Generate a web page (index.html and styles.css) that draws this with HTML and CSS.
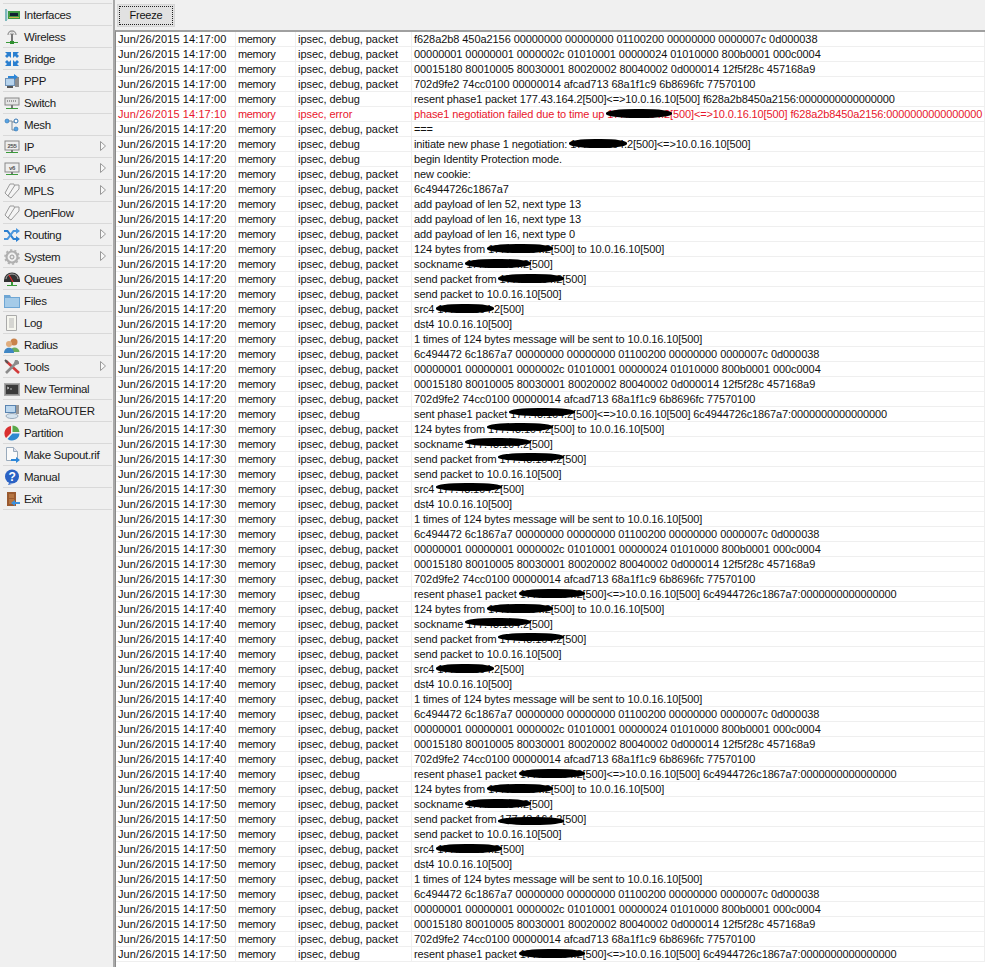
FILE: index.html
```html
<!DOCTYPE html>
<html lang="en">
<head>
<meta charset="utf-8">
<title>Log</title>
<link rel="stylesheet" href="styles.css">
</head>
<body>
<div class="app">
<nav class="menu">
<a class="item"><svg class="ic" viewBox="0 0 16 16"><path d="M1 2h2v12H1z" fill="#7fb8bd"/><path d="M3 3h1v10H3z" fill="#c5dfe0"/><rect x="4" y="4" width="12" height="8" fill="#3f9a45"/><rect x="6" y="6" width="8" height="3" fill="#123"/><path d="M5 10h10v1H5z" fill="#c9b24a"/></svg><span>Interfaces</span></a>
<a class="item"><svg class="ic" viewBox="0 0 16 16"><path d="M4 6a4 4 0 0 1 8 0" fill="none" stroke="#999" stroke-width="1.3"/><path d="M6 6a2 2 0 0 1 4 0" fill="none" stroke="#aaa"/><rect x="7" y="5" width="2" height="8" fill="#777"/><path d="M2 13h12v1H2z" fill="#3a9a3a"/><path d="M6 12h4v3H6z" fill="#2f8f2f"/></svg><span>Wireless</span></a>
<a class="item"><svg class="ic" viewBox="0 0 16 16"><g fill="#2b7fd0"><path d="M1 1h6v6L5 5 3 7 1 5l2-2z"/><path d="M15 1H9v6l2-2 2 2 2-2-2-2z"/><path d="M1 15h6V9l-2 2-2-2-2 2 2 2z"/><path d="M15 15H9V9l2 2 2-2 2 2-2 2z"/></g></svg><span>Bridge</span></a>
<a class="item"><svg class="ic" viewBox="0 0 16 16"><rect x="1" y="5" width="10" height="8" fill="#6f93b8"/><rect x="2" y="6" width="8" height="6" fill="#b7d3ec"/><rect x="11" y="4" width="4" height="10" fill="#8d8d8d"/><path d="M4 3h6V1l4 3-4 3V5H4z" fill="#2c86d8"/><path d="M3 13h6v2H3z" fill="#555"/></svg><span>PPP</span></a>
<a class="item"><svg class="ic" viewBox="0 0 16 16"><rect x="1" y="3" width="14" height="7" fill="#e4e4e4" stroke="#888"/><path d="M3 6h10" stroke="#555" stroke-dasharray="1 1"/><path d="M7 10h2v3H7z" fill="#777"/><path d="M2 13h12v1H2z" fill="#3a9a3a"/></svg><span>Switch</span></a>
<a class="item"><svg class="ic" viewBox="0 0 16 16"><path d="M3 4h5v9h4M8 5h4" fill="none" stroke="#7a8a9a"/><circle cx="3" cy="4" r="2" fill="#58a4e4" stroke="#2b70b0" stroke-width=".6"/><circle cx="12" cy="4" r="2" fill="#fff" stroke="#2b70b0"/><circle cx="12" cy="12" r="2" fill="#58a4e4" stroke="#2b70b0" stroke-width=".6"/></svg><span>Mesh</span></a>
<a class="item"><svg class="ic" viewBox="0 0 16 16"><rect x="1" y="2" width="14" height="9" fill="#eee" stroke="#888"/><text x="8" y="9" class="ictx">255</text><path d="M7 11h2v2H7z" fill="#777"/><path d="M2 13h12v1H2z" fill="#3a9a3a"/></svg><span>IP</span><svg class="arrow" viewBox="0 0 6 10"><path d="M.5.5l5 4.5-5 4.5z" fill="#f8f8f8" stroke="#999"/></svg></a>
<a class="item"><svg class="ic" viewBox="0 0 16 16"><rect x="1" y="2" width="14" height="9" fill="#eee" stroke="#888"/><text x="8" y="9" class="ictx">v6</text><path d="M7 11h2v2H7z" fill="#777"/><path d="M2 13h12v1H2z" fill="#3a9a3a"/></svg><span>IPv6</span><svg class="arrow" viewBox="0 0 6 10"><path d="M.5.5l5 4.5-5 4.5z" fill="#f8f8f8" stroke="#999"/></svg></a>
<a class="item"><svg class="ic" viewBox="0 0 16 16"><g fill="#f4f4f4" stroke="#9a9a9a"><path d="M6 1h4l1 4-7 8-3-3z"/><path d="M11 2h4v4l-8 9-3-2z"/></g></svg><span>MPLS</span><svg class="arrow" viewBox="0 0 6 10"><path d="M.5.5l5 4.5-5 4.5z" fill="#f8f8f8" stroke="#999"/></svg></a>
<a class="item"><svg class="ic" viewBox="0 0 16 16"><g fill="#f4f4f4" stroke="#9a9a9a"><path d="M6 1h4l1 4-7 8-3-3z"/><path d="M11 2h4v4l-8 9-3-2z"/></g></svg><span>OpenFlow</span></a>
<a class="item"><svg class="ic" viewBox="0 0 16 16"><path d="M0 3h4l6 8h2V9l4 3-4 3v-2H9L3 5H0z" fill="#2b7fd0"/><path d="M0 11h3l6-8h3V1l4 3-4 3V5h-2L4 13H0z" fill="#4c97dd"/></svg><span>Routing</span><svg class="arrow" viewBox="0 0 6 10"><path d="M.5.5l5 4.5-5 4.5z" fill="#f8f8f8" stroke="#999"/></svg></a>
<a class="item"><svg class="ic" viewBox="0 0 16 16"><circle cx="8" cy="8" r="5.5" fill="none" stroke="#b0b0b0" stroke-width="2.2"/><circle cx="8" cy="8" r="7" fill="none" stroke="#b0b0b0" stroke-width="1.6" stroke-dasharray="2.2 2.2"/><circle cx="8" cy="8" r="2" fill="#e8e8e8" stroke="#999"/></svg><span>System</span><svg class="arrow" viewBox="0 0 6 10"><path d="M.5.5l5 4.5-5 4.5z" fill="#f8f8f8" stroke="#999"/></svg></a>
<a class="item"><svg class="ic" viewBox="0 0 16 16"><path d="M0 9a8 7.5 0 0 1 16 0v2H0z" fill="#333"/><path d="M2 8a6 5 0 0 1 12 0" fill="none" stroke="#aaa"/><path d="M5 4l4 7" stroke="#e02828" stroke-width="1.2"/><path d="M3 14h10v1H3z" fill="#3a9a3a"/><path d="M7 11h2v3H7z" fill="#3a9a3a"/></svg><span>Queues</span></a>
<a class="item"><svg class="ic" viewBox="0 0 16 16"><path d="M0 2h6l1 2h9v11H0z" fill="#6ea6d4"/><path d="M1 5h14v9H1z" fill="#a5cbe8"/></svg><span>Files</span></a>
<a class="item"><svg class="ic" viewBox="0 0 16 16"><path d="M2.500.5h10v15h-10z" fill="#f6f6ef" stroke="#aaa"/><path d="M5 4h5M5 6h5M5 8h5M5 10h5M5 12h5" stroke="#b5b5b5"/></svg><span>Log</span></a>
<a class="item"><svg class="ic" viewBox="0 0 16 16"><circle cx="10" cy="5" r="3.500" fill="#c9824a"/><path d="M6 15c0-6 9-6 9.500 0z" fill="#6bae5c"/><circle cx="5" cy="7" r="3" fill="#e0ad7e"/><path d="M0 16c0-7 10-7 10 0z" fill="#3f86c4"/></svg><span>Radius</span></a>
<a class="item"><svg class="ic" viewBox="0 0 16 16"><path d="M2 2l13 12" stroke="#d23a3a" stroke-width="2.600"/><path d="M1 1l3 3" stroke="#555" stroke-width="2"/><path d="M14 2L2 14" stroke="#8c8c8c" stroke-width="2.600"/><path d="M11 1h3l-2 2 1 1 2-2v3l-3 1-2-2z" fill="#8c8c8c"/></svg><span>Tools</span><svg class="arrow" viewBox="0 0 6 10"><path d="M.5.5l5 4.5-5 4.5z" fill="#f8f8f8" stroke="#999"/></svg></a>
<a class="item"><svg class="ic" viewBox="0 0 16 16"><rect x=".5" y="2.500" width="15" height="12" fill="#8a8a8a" stroke="#aaa"/><rect x="2" y="4" width="12" height="9" fill="#3a3a3a"/><path d="M3 6l2 1-2 1M6 8h2" stroke="#ddd" stroke-width=".8" fill="none"/></svg><span>New Terminal</span></a>
<a class="item"><svg class="ic" viewBox="0 0 16 16"><rect x="1" y="2" width="11" height="8" fill="#5a84b0"/><rect x="2" y="3" width="9" height="6" fill="#bcd7ee"/><rect x="12" y="2" width="3" height="9" fill="#999"/><ellipse cx="8" cy="13" rx="6" ry="2.500" fill="#d5e3ee" stroke="#9ab"/></svg><span>MetaROUTER</span></a>
<a class="item"><svg class="ic" viewBox="0 0 16 16"><path d="M7 1v7l-5 5A7.500 7.500 0 0 1 7 1z" fill="#d93030"/><path d="M8.500.5A7 7 0 0 1 15.500 7h-7z" fill="#5aa84a"/><path d="M15.500 8.500A7.500 7.500 0 0 1 3.500 14l5-5.500z" fill="#2d88d0"/></svg><span>Partition</span></a>
<a class="item"><svg class="ic" viewBox="0 0 16 16"><path d="M2.500.5h7l4 4v9h-11z" fill="#fafafa" stroke="#9ab"/><path d="M9.500.5v4h4" fill="#dde" stroke="#9ab"/><path d="M7 12h5v-2l4 3-4 3v-2H7z" fill="#2c86d8"/></svg><span>Make Supout.rif</span></a>
<a class="item"><svg class="ic" viewBox="0 0 16 16"><circle cx="8" cy="7.500" r="7" fill="#2a62c4"/><path d="M5 14l-1 2 4-1z" fill="#2a62c4"/><text x="8" y="11.500" class="ichelp">?</text></svg><span>Manual</span></a>
<a class="item"><svg class="ic" viewBox="0 0 16 16"><rect x="3" y="1" width="9" height="14" fill="#9a5a30"/><rect x="5" y="3" width="5" height="4" fill="#b57542"/><rect x="5" y="8" width="5" height="5" fill="#b57542"/><path d="M16 11h-5V9l-4 3 4 3v-2h5z" fill="#3b8fdc"/></svg><span>Exit</span></a>
</nav>
<main class="panel">
<div class="toolbar"><button class="btn" type="button"><span class="btn-label">Freeze</span></button></div>
<div class="log">
<div class="row"><span class="c1">Jun/26/2015 14:17:00</span><span class="c2">memory</span><span class="c3">ipsec, debug, packet</span><span class="c4 hex">f628a2b8 450a2156 00000000 00000000 01100200 00000000 0000007c 0d000038</span></div>
<div class="row"><span class="c1">Jun/26/2015 14:17:00</span><span class="c2">memory</span><span class="c3">ipsec, debug, packet</span><span class="c4 hex">00000001 00000001 0000002c 01010001 00000024 01010000 800b0001 000c0004</span></div>
<div class="row"><span class="c1">Jun/26/2015 14:17:00</span><span class="c2">memory</span><span class="c3">ipsec, debug, packet</span><span class="c4 hex">00015180 80010005 80030001 80020002 80040002 0d000014 12f5f28c 457168a9</span></div>
<div class="row"><span class="c1">Jun/26/2015 14:17:00</span><span class="c2">memory</span><span class="c3">ipsec, debug, packet</span><span class="c4 hex">702d9fe2 74cc0100 00000014 afcad713 68a1f1c9 6b8696fc 77570100</span></div>
<div class="row"><span class="c1">Jun/26/2015 14:17:00</span><span class="c2">memory</span><span class="c3">ipsec, debug</span><span class="c4">resent phase1 packet 177.43.164.2[500]&lt;=&gt;10.0.16.10[500] f628a2b8450a2156:0000000000000000</span></div>
<div class="row err"><span class="c1">Jun/26/2015 14:17:10</span><span class="c2">memory</span><span class="c3">ipsec, error</span><span class="c4">phase1 negotiation failed due to time up <span class="ip">177.43.164.2<i class="blob"></i></span>[500]&lt;=&gt;10.0.16.10[500] f628a2b8450a2156:0000000000000000</span></div>
<div class="row"><span class="c1">Jun/26/2015 14:17:20</span><span class="c2">memory</span><span class="c3">ipsec, debug, packet</span><span class="c4">===</span></div>
<div class="row"><span class="c1">Jun/26/2015 14:17:20</span><span class="c2">memory</span><span class="c3">ipsec, debug</span><span class="c4">initiate new phase 1 negotiation: <span class="ip">177.43.164.2<i class="blob keep"></i></span>[500]&lt;=&gt;10.0.16.10[500]</span></div>
<div class="row"><span class="c1">Jun/26/2015 14:17:20</span><span class="c2">memory</span><span class="c3">ipsec, debug</span><span class="c4">begin Identity Protection mode.</span></div>
<div class="row"><span class="c1">Jun/26/2015 14:17:20</span><span class="c2">memory</span><span class="c3">ipsec, debug, packet</span><span class="c4">new cookie:</span></div>
<div class="row"><span class="c1">Jun/26/2015 14:17:20</span><span class="c2">memory</span><span class="c3">ipsec, debug, packet</span><span class="c4">6c4944726c1867a7</span></div>
<div class="row"><span class="c1">Jun/26/2015 14:17:20</span><span class="c2">memory</span><span class="c3">ipsec, debug, packet</span><span class="c4">add payload of len 52, next type 13</span></div>
<div class="row"><span class="c1">Jun/26/2015 14:17:20</span><span class="c2">memory</span><span class="c3">ipsec, debug, packet</span><span class="c4">add payload of len 16, next type 13</span></div>
<div class="row"><span class="c1">Jun/26/2015 14:17:20</span><span class="c2">memory</span><span class="c3">ipsec, debug, packet</span><span class="c4">add payload of len 16, next type 0</span></div>
<div class="row"><span class="c1">Jun/26/2015 14:17:20</span><span class="c2">memory</span><span class="c3">ipsec, debug, packet</span><span class="c4">124 bytes from <span class="ip">177.43.164.2<i class="blob"></i></span>[500] to 10.0.16.10[500]</span></div>
<div class="row"><span class="c1">Jun/26/2015 14:17:20</span><span class="c2">memory</span><span class="c3">ipsec, debug, packet</span><span class="c4">sockname <span class="ip">177.43.164.2<i class="blob"></i></span>[500]</span></div>
<div class="row"><span class="c1">Jun/26/2015 14:17:20</span><span class="c2">memory</span><span class="c3">ipsec, debug, packet</span><span class="c4">send packet from <span class="ip">177.43.164.2<i class="blob"></i></span>[500]</span></div>
<div class="row"><span class="c1">Jun/26/2015 14:17:20</span><span class="c2">memory</span><span class="c3">ipsec, debug, packet</span><span class="c4">send packet to 10.0.16.10[500]</span></div>
<div class="row"><span class="c1">Jun/26/2015 14:17:20</span><span class="c2">memory</span><span class="c3">ipsec, debug, packet</span><span class="c4">src4 <span class="ip">177.43.164.2<i class="blob keep"></i></span>[500]</span></div>
<div class="row"><span class="c1">Jun/26/2015 14:17:20</span><span class="c2">memory</span><span class="c3">ipsec, debug, packet</span><span class="c4">dst4 10.0.16.10[500]</span></div>
<div class="row"><span class="c1">Jun/26/2015 14:17:20</span><span class="c2">memory</span><span class="c3">ipsec, debug, packet</span><span class="c4">1 times of 124 bytes message will be sent to 10.0.16.10[500]</span></div>
<div class="row"><span class="c1">Jun/26/2015 14:17:20</span><span class="c2">memory</span><span class="c3">ipsec, debug, packet</span><span class="c4 hex">6c494472 6c1867a7 00000000 00000000 01100200 00000000 0000007c 0d000038</span></div>
<div class="row"><span class="c1">Jun/26/2015 14:17:20</span><span class="c2">memory</span><span class="c3">ipsec, debug, packet</span><span class="c4 hex">00000001 00000001 0000002c 01010001 00000024 01010000 800b0001 000c0004</span></div>
<div class="row"><span class="c1">Jun/26/2015 14:17:20</span><span class="c2">memory</span><span class="c3">ipsec, debug, packet</span><span class="c4 hex">00015180 80010005 80030001 80020002 80040002 0d000014 12f5f28c 457168a9</span></div>
<div class="row"><span class="c1">Jun/26/2015 14:17:20</span><span class="c2">memory</span><span class="c3">ipsec, debug, packet</span><span class="c4 hex">702d9fe2 74cc0100 00000014 afcad713 68a1f1c9 6b8696fc 77570100</span></div>
<div class="row"><span class="c1">Jun/26/2015 14:17:20</span><span class="c2">memory</span><span class="c3">ipsec, debug</span><span class="c4">sent phase1 packet <span class="ip">177.43.164.2<i class="blob upper"></i></span>[500]&lt;=&gt;10.0.16.10[500] 6c4944726c1867a7:0000000000000000</span></div>
<div class="row"><span class="c1">Jun/26/2015 14:17:30</span><span class="c2">memory</span><span class="c3">ipsec, debug, packet</span><span class="c4">124 bytes from <span class="ip">177.43.164.2<i class="blob upper"></i></span>[500] to 10.0.16.10[500]</span></div>
<div class="row"><span class="c1">Jun/26/2015 14:17:30</span><span class="c2">memory</span><span class="c3">ipsec, debug, packet</span><span class="c4">sockname <span class="ip">177.43.164.2<i class="blob upper"></i></span>[500]</span></div>
<div class="row"><span class="c1">Jun/26/2015 14:17:30</span><span class="c2">memory</span><span class="c3">ipsec, debug, packet</span><span class="c4">send packet from <span class="ip">177.43.164.2<i class="blob upper"></i></span>[500]</span></div>
<div class="row"><span class="c1">Jun/26/2015 14:17:30</span><span class="c2">memory</span><span class="c3">ipsec, debug, packet</span><span class="c4">send packet to 10.0.16.10[500]</span></div>
<div class="row"><span class="c1">Jun/26/2015 14:17:30</span><span class="c2">memory</span><span class="c3">ipsec, debug, packet</span><span class="c4">src4 <span class="ip">177.43.164.2<i class="blob upper"></i></span>[500]</span></div>
<div class="row"><span class="c1">Jun/26/2015 14:17:30</span><span class="c2">memory</span><span class="c3">ipsec, debug, packet</span><span class="c4">dst4 10.0.16.10[500]</span></div>
<div class="row"><span class="c1">Jun/26/2015 14:17:30</span><span class="c2">memory</span><span class="c3">ipsec, debug, packet</span><span class="c4">1 times of 124 bytes message will be sent to 10.0.16.10[500]</span></div>
<div class="row"><span class="c1">Jun/26/2015 14:17:30</span><span class="c2">memory</span><span class="c3">ipsec, debug, packet</span><span class="c4 hex">6c494472 6c1867a7 00000000 00000000 01100200 00000000 0000007c 0d000038</span></div>
<div class="row"><span class="c1">Jun/26/2015 14:17:30</span><span class="c2">memory</span><span class="c3">ipsec, debug, packet</span><span class="c4 hex">00000001 00000001 0000002c 01010001 00000024 01010000 800b0001 000c0004</span></div>
<div class="row"><span class="c1">Jun/26/2015 14:17:30</span><span class="c2">memory</span><span class="c3">ipsec, debug, packet</span><span class="c4 hex">00015180 80010005 80030001 80020002 80040002 0d000014 12f5f28c 457168a9</span></div>
<div class="row"><span class="c1">Jun/26/2015 14:17:30</span><span class="c2">memory</span><span class="c3">ipsec, debug, packet</span><span class="c4 hex">702d9fe2 74cc0100 00000014 afcad713 68a1f1c9 6b8696fc 77570100</span></div>
<div class="row"><span class="c1">Jun/26/2015 14:17:30</span><span class="c2">memory</span><span class="c3">ipsec, debug</span><span class="c4">resent phase1 packet <span class="ip">177.43.164.2<i class="blob"></i></span>[500]&lt;=&gt;10.0.16.10[500] 6c4944726c1867a7:0000000000000000</span></div>
<div class="row"><span class="c1">Jun/26/2015 14:17:40</span><span class="c2">memory</span><span class="c3">ipsec, debug, packet</span><span class="c4">124 bytes from <span class="ip">177.43.164.2<i class="blob"></i></span>[500] to 10.0.16.10[500]</span></div>
<div class="row"><span class="c1">Jun/26/2015 14:17:40</span><span class="c2">memory</span><span class="c3">ipsec, debug, packet</span><span class="c4">sockname <span class="ip">177.43.164.2<i class="blob upper"></i></span>[500]</span></div>
<div class="row"><span class="c1">Jun/26/2015 14:17:40</span><span class="c2">memory</span><span class="c3">ipsec, debug, packet</span><span class="c4">send packet from <span class="ip">177.43.164.2<i class="blob upper"></i></span>[500]</span></div>
<div class="row"><span class="c1">Jun/26/2015 14:17:40</span><span class="c2">memory</span><span class="c3">ipsec, debug, packet</span><span class="c4">send packet to 10.0.16.10[500]</span></div>
<div class="row"><span class="c1">Jun/26/2015 14:17:40</span><span class="c2">memory</span><span class="c3">ipsec, debug, packet</span><span class="c4">src4 <span class="ip">177.43.164.2<i class="blob keep"></i></span>[500]</span></div>
<div class="row"><span class="c1">Jun/26/2015 14:17:40</span><span class="c2">memory</span><span class="c3">ipsec, debug, packet</span><span class="c4">dst4 10.0.16.10[500]</span></div>
<div class="row"><span class="c1">Jun/26/2015 14:17:40</span><span class="c2">memory</span><span class="c3">ipsec, debug, packet</span><span class="c4">1 times of 124 bytes message will be sent to 10.0.16.10[500]</span></div>
<div class="row"><span class="c1">Jun/26/2015 14:17:40</span><span class="c2">memory</span><span class="c3">ipsec, debug, packet</span><span class="c4 hex">6c494472 6c1867a7 00000000 00000000 01100200 00000000 0000007c 0d000038</span></div>
<div class="row"><span class="c1">Jun/26/2015 14:17:40</span><span class="c2">memory</span><span class="c3">ipsec, debug, packet</span><span class="c4 hex">00000001 00000001 0000002c 01010001 00000024 01010000 800b0001 000c0004</span></div>
<div class="row"><span class="c1">Jun/26/2015 14:17:40</span><span class="c2">memory</span><span class="c3">ipsec, debug, packet</span><span class="c4 hex">00015180 80010005 80030001 80020002 80040002 0d000014 12f5f28c 457168a9</span></div>
<div class="row"><span class="c1">Jun/26/2015 14:17:40</span><span class="c2">memory</span><span class="c3">ipsec, debug, packet</span><span class="c4 hex">702d9fe2 74cc0100 00000014 afcad713 68a1f1c9 6b8696fc 77570100</span></div>
<div class="row"><span class="c1">Jun/26/2015 14:17:40</span><span class="c2">memory</span><span class="c3">ipsec, debug</span><span class="c4">resent phase1 packet <span class="ip">177.43.164.2<i class="blob"></i></span>[500]&lt;=&gt;10.0.16.10[500] 6c4944726c1867a7:0000000000000000</span></div>
<div class="row"><span class="c1">Jun/26/2015 14:17:50</span><span class="c2">memory</span><span class="c3">ipsec, debug, packet</span><span class="c4">124 bytes from <span class="ip">177.43.164.2<i class="blob"></i></span>[500] to 10.0.16.10[500]</span></div>
<div class="row"><span class="c1">Jun/26/2015 14:17:50</span><span class="c2">memory</span><span class="c3">ipsec, debug, packet</span><span class="c4">sockname <span class="ip">177.43.164.2<i class="blob"></i></span>[500]</span></div>
<div class="row"><span class="c1">Jun/26/2015 14:17:50</span><span class="c2">memory</span><span class="c3">ipsec, debug, packet</span><span class="c4">send packet from <span class="ip">177.43.164.2<i class="blob lower"></i></span>[500]</span></div>
<div class="row"><span class="c1">Jun/26/2015 14:17:50</span><span class="c2">memory</span><span class="c3">ipsec, debug, packet</span><span class="c4">send packet to 10.0.16.10[500]</span></div>
<div class="row"><span class="c1">Jun/26/2015 14:17:50</span><span class="c2">memory</span><span class="c3">ipsec, debug, packet</span><span class="c4">src4 <span class="ip">177.43.164.2<i class="blob"></i></span>[500]</span></div>
<div class="row"><span class="c1">Jun/26/2015 14:17:50</span><span class="c2">memory</span><span class="c3">ipsec, debug, packet</span><span class="c4">dst4 10.0.16.10[500]</span></div>
<div class="row"><span class="c1">Jun/26/2015 14:17:50</span><span class="c2">memory</span><span class="c3">ipsec, debug, packet</span><span class="c4">1 times of 124 bytes message will be sent to 10.0.16.10[500]</span></div>
<div class="row"><span class="c1">Jun/26/2015 14:17:50</span><span class="c2">memory</span><span class="c3">ipsec, debug, packet</span><span class="c4 hex">6c494472 6c1867a7 00000000 00000000 01100200 00000000 0000007c 0d000038</span></div>
<div class="row"><span class="c1">Jun/26/2015 14:17:50</span><span class="c2">memory</span><span class="c3">ipsec, debug, packet</span><span class="c4 hex">00000001 00000001 0000002c 01010001 00000024 01010000 800b0001 000c0004</span></div>
<div class="row"><span class="c1">Jun/26/2015 14:17:50</span><span class="c2">memory</span><span class="c3">ipsec, debug, packet</span><span class="c4 hex">00015180 80010005 80030001 80020002 80040002 0d000014 12f5f28c 457168a9</span></div>
<div class="row"><span class="c1">Jun/26/2015 14:17:50</span><span class="c2">memory</span><span class="c3">ipsec, debug, packet</span><span class="c4 hex">702d9fe2 74cc0100 00000014 afcad713 68a1f1c9 6b8696fc 77570100</span></div>
<div class="row"><span class="c1">Jun/26/2015 14:17:50</span><span class="c2">memory</span><span class="c3">ipsec, debug</span><span class="c4">resent phase1 packet <span class="ip">177.43.164.2<i class="blob"></i></span>[500]&lt;=&gt;10.0.16.10[500] 6c4944726c1867a7:0000000000000000</span></div>
</div>
</main>
</div>
</body>
</html>
```
FILE: styles.css
```css
html, body {
  margin: 0;
  height: 100%;
  overflow: hidden;
}
body {
  font-family: "Liberation Sans", Arial, sans-serif;
  font-size: 11px;
  color: #111;
  background: #f0f0f0;
}
.app {
  display: flex;
  height: 967px;
}
.menu {
  flex: none;
  width: 113px;
  box-sizing: border-box;
  padding: 3px 1px 0 3px;
  background: #f0f0f0;
  display: flex;
  flex-direction: column;
  align-items: stretch;
}
.item {
  display: flex;
  align-items: center;
  flex: none;
  height: 22px;
  box-sizing: border-box;
  padding-top: 1px;
  border-top: 1px solid #d9d9d9;
  font-size: 11.5px;
  letter-spacing: -.35px;
  color: #1a1a1a;
}
.item:last-child {
  height: 23px;
  border-bottom: 1px solid #d9d9d9;
}
.ic {
  flex: none;
  width: 16px;
  height: 16px;
  margin: 0 4px 0 1px;
}
.ictx {
  font-size: 6px;
  font-weight: 700;
  text-anchor: middle;
  fill: #555;
}
.ichelp {
  font-size: 12px;
  font-weight: 700;
  text-anchor: middle;
  fill: #fff;
}
.item .arrow {
  flex: none;
  width: 6px;
  height: 10px;
  margin: -2px 6px 0 auto;
}
.panel {
  flex: 1;
  min-width: 0;
  display: flex;
  flex-direction: column;
  border-left: 2px solid #a9a9a9;
}
.toolbar {
  flex: none;
  height: 30px;
  box-sizing: border-box;
  padding: 4px 0 0 2px;
  background: #f0f0f0;
}
.btn {
  display: block;
  width: 58px;
  height: 23px;
  padding: 1px;
  margin: 0;
  border: 1px solid #d6d6d6;
  background: #e1e1e1;
  font: inherit;
  color: #111;
}
.btn-label {
  display: flex;
  align-items: center;
  justify-content: center;
  height: 100%;
  box-sizing: border-box;
  padding-bottom: 1px;
  border: 1px dotted #222;
  font-size: 11px;
  letter-spacing: -.2px;
}
.log {
  flex: 1;
  min-height: 0;
  background: #fff;
  border-top: 2px solid #a0a0a0;
  border-left: 1px solid #8a8a8a;
  overflow: hidden;
}
.row {
  display: flex;
  height: 15px;
  box-sizing: border-box;
  border-bottom: 1px solid #efefef;
  line-height: 14px;
  white-space: nowrap;
}
.row span[class^="c"] {
  flex: none;
  box-sizing: border-box;
  padding-left: 2px;
  border-right: 1px solid #efefef;
  height: 14px;
}
.row .c1 { width: 120px; padding-left: 3px; letter-spacing: .1px; }
.row .c2 { width: 60px; letter-spacing: -.4px; }
.row .c3 { width: 116px; letter-spacing: -.05px; }
.row .c4 { width: 573px; border-right: 0; letter-spacing: -.12px; }
.row .c4.hex { letter-spacing: -.07px; }
.err { color: #e8162c; }
.ip {
  position: relative;
  display: inline-block;
}
.blob {
  position: absolute;
  left: -1px;
  right: -2px;
  top: 2px;
  height: 9px;
  background: #000;
  border-radius: 45%;
}
.blob.keep { right: 6px; }
.blob.upper { top: 1px; height: 8px; }
.blob.lower { top: 5px; height: 8px; }
```
